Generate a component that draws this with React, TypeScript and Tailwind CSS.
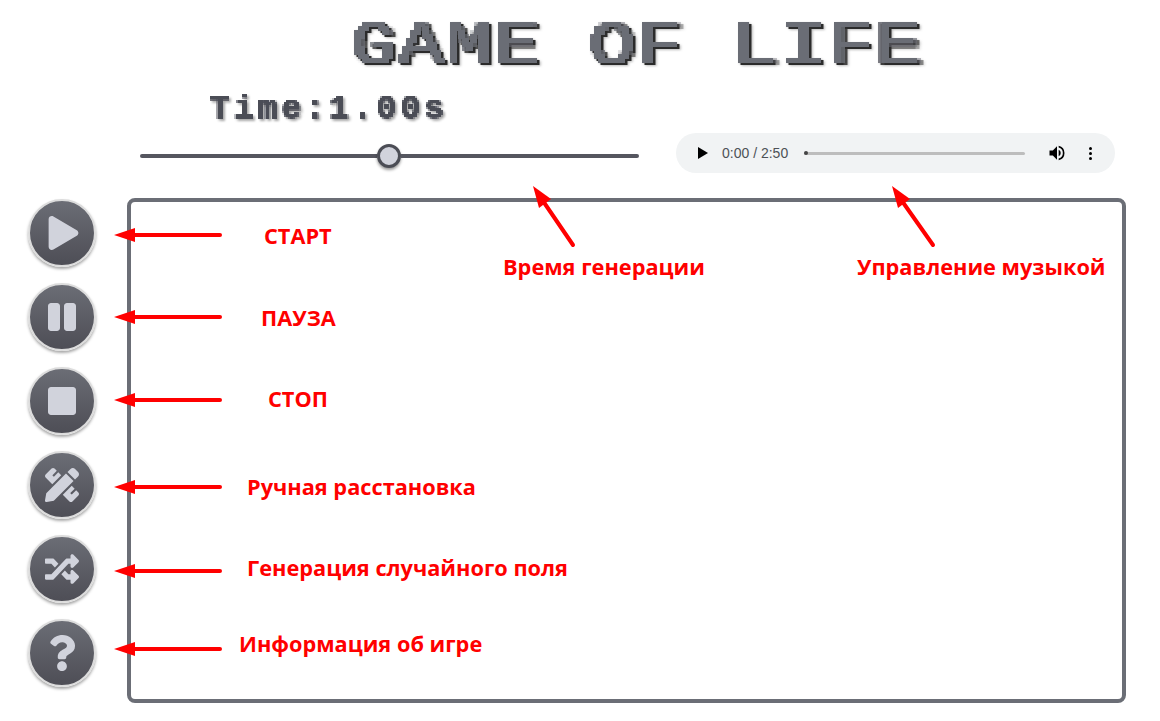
import { FaPlay, FaPause, FaStop, FaPencilRuler, FaRandom, FaQuestion } from 'react-icons/fa';

const buttons = [
  { name: 'play', icon: <FaPlay className="w-[31px] h-[34px] ml-[3px]" /> },
  { name: 'pause', icon: <FaPause className="w-[32px] h-[32px]" /> },
  { name: 'stop', icon: <FaStop className="w-[32px] h-[32px]" /> },
  { name: 'manual', icon: <FaPencilRuler className="w-[34px] h-[34px]" /> },
  { name: 'random', icon: <FaRandom className="w-[34px] h-[34px]" /> },
  { name: 'info', icon: <FaQuestion className="w-[32px] h-[36px]" /> },
];

const arrowRows = [235, 317, 400, 487, 571, 649];

function Arrows() {
  return (
    <svg className="absolute inset-0 pointer-events-none" width="1160" height="721" viewBox="0 0 1160 721">
      {arrowRows.map((y) => (
        <g key={y}>
          <line x1="130" y1={y} x2="220" y2={y} stroke="#ff0000" strokeWidth="4" strokeLinecap="round" />
          <polygon points={`114,${y} 135,${y - 7} 135,${y + 7}`} fill="#ff0000" />
        </g>
      ))}
      <line x1="543" y1="201" x2="573" y2="245" stroke="#ff0000" strokeWidth="4" strokeLinecap="round" />
      <polygon points="533,186 551,199 539,208" fill="#ff0000" />
      <line x1="902" y1="201" x2="933" y2="245" stroke="#ff0000" strokeWidth="4" strokeLinecap="round" />
      <polygon points="892,186 910,199 898,208" fill="#ff0000" />
    </svg>
  );
}

function Label({ className, children }: { className: string; children: string }) {
  return (
    <span className={`absolute whitespace-nowrap font-bold text-[#ff0000] text-[21.75px] leading-[28px] font-['Open_Sans',sans-serif] ${className}`}>
      {children}
    </span>
  );
}

export default function App() {
  return (
    <div className="relative w-[1160px] h-[721px] overflow-hidden bg-white font-['Liberation_Sans',sans-serif]">
      {/* blocky look for the title text */}
      <svg className="absolute w-0 h-0">
        <filter id="pixel4" x="0" y="0" width="100%" height="100%">
          <feFlood x="2" y="2" width="1" height="1" />
          <feComposite width="4" height="4" />
          <feTile result="grid" />
          <feComposite in="SourceGraphic" in2="grid" operator="in" />
          <feMorphology operator="dilate" radius="2" />
        </filter>
        <filter id="pixel2" x="0" y="0" width="100%" height="100%">
          <feFlood x="1" y="1" width="1" height="1" />
          <feComposite width="2" height="2" />
          <feTile result="grid" />
          <feComposite in="SourceGraphic" in2="grid" operator="in" />
          <feMorphology operator="dilate" radius="1" />
        </filter>
      </svg>

      <header className="flex justify-center pl-[112px] h-[88px] pt-[14px]">
        <div className="scale-x-[1.25] [filter:drop-shadow(2px_2px_0_#2b2b2b)_drop-shadow(1px_1px_1px_#bbbbbb)]">
          <h1 className="[filter:url(#pixel4)] font-['Liberation_Mono',monospace] font-normal text-[62px] leading-[66px] tracking-[1px] text-[#6b6d75] whitespace-pre">
            GAME OF LIFE
          </h1>
        </div>
      </header>

      <div className="flex items-start pl-[140px]">
        <div className="w-[499px] flex flex-col">
          <div className="pl-[70px] h-[42px] pt-[2px] [filter:drop-shadow(2px_2px_1px_#aaaaaa)]">
            <span className="[filter:url(#pixel2)] inline-block font-['Liberation_Mono',monospace] font-bold text-[33px] leading-[40px] tracking-[4px] text-[#4b4d57] whitespace-pre">
              Time:1.00s
            </span>
          </div>
          <div className="flex items-center h-[26px] mt-[13px]">
            <div className="h-[4px] w-[237px] rounded-l-full bg-[#55565f]" />
            <div className="w-[24px] h-[24px] shrink-0 rounded-full bg-[#d1d3dc] border-[3px] border-[#4b4d55] shadow-[0_2px_3px_rgba(0,0,0,0.4)]" />
            <div className="h-[4px] flex-1 rounded-r-full bg-[#55565f]" />
          </div>
        </div>

        <div className="ml-[37px] mt-[45px] w-[439px] h-[40px] rounded-full bg-[#f1f3f4] flex items-center pl-[21px]">
          <svg width="12" height="14" viewBox="0 0 12 14">
            <path d="M1 1 L11 7 L1 13 Z" fill="#000000" />
          </svg>
          <span className="ml-[13px] pt-[1px] text-[14px] text-[#4d5156] whitespace-nowrap">0:00 / 2:50</span>
          <div className="relative ml-[16px] w-[221px] h-[3px] rounded-full bg-[#bdbdbd]">
            <div className="absolute left-0 top-[-0.5px] w-[4px] h-[4px] rounded-full bg-[#444444]" />
          </div>
          <svg className="ml-[22px]" width="20" height="20" viewBox="0 0 24 24">
            <path
              fill="#000000"
              d="M3 9v6h4l5 5V4L7 9H3zm13.5 3A4.5 4.5 0 0 0 14 7.97v8.05A4.5 4.5 0 0 0 16.5 12zM14 3.23v2.06a7 7 0 0 1 0 13.42v2.06a9 9 0 0 0 0-17.54z"
            />
          </svg>
          <div className="ml-[22px] flex flex-col gap-[2px]">
            <div className="w-[3px] h-[3px] rounded-full bg-black" />
            <div className="w-[3px] h-[3px] rounded-full bg-black" />
            <div className="w-[3px] h-[3px] rounded-full bg-black" />
          </div>
        </div>
      </div>

      <main className="flex items-start pl-[28px] mt-[25px]">
        <div className="flex flex-col gap-[16px] w-[69px] pt-[1px]">
          {buttons.map((b) => (
            <button
              key={b.name}
              aria-label={b.name}
              className="w-[68px] h-[68px] rounded-full flex items-center justify-center text-[#d1d3dc] bg-gradient-to-b from-[#6b6d75] to-[#4e4e56] border-[2px] border-[#dcdcdc] shadow-[0_2px_3px_rgba(0,0,0,0.35)]"
            >
              {b.icon}
            </button>
          ))}
        </div>
        <div className="ml-[30px] w-[999px] h-[505px] rounded-[8px] border-[4px] border-[#6b6e76] bg-white" />
      </main>

      <Arrows />

      <Label className="left-[264px] top-[222px]">СТАРТ</Label>
      <Label className="left-[261px] top-[304px]">ПАУЗА</Label>
      <Label className="left-[268px] top-[385px]">СТОП</Label>
      <Label className="left-[247px] top-[473px]">Ручная расстановка</Label>
      <Label className="left-[247px] top-[554px]">Генерация случайного поля</Label>
      <Label className="left-[239px] top-[630px]">Информация об игре</Label>
      <Label className="left-[503px] top-[253px]">Время генерации</Label>
      <Label className="left-[857px] top-[253px]">Управление музыкой</Label>
    </div>
  );
}
